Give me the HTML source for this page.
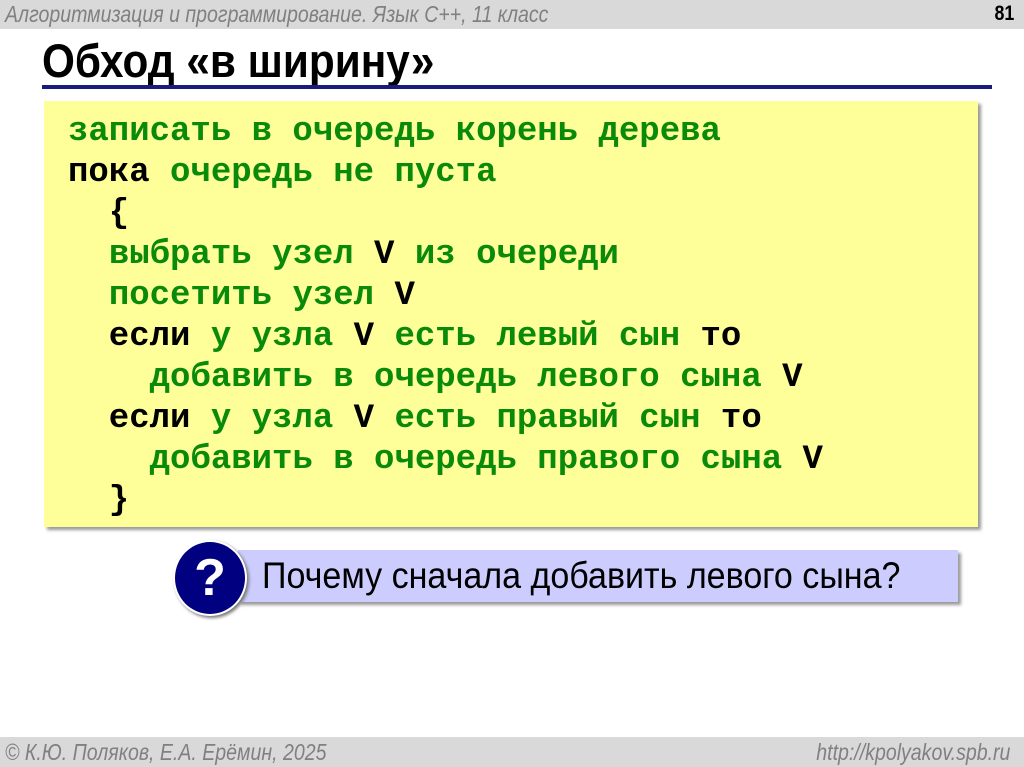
<!DOCTYPE html>
<html><head><meta charset="utf-8"><style>
body{margin:0;width:1024px;height:767px;background:#fff;position:relative;overflow:hidden;font-family:"Liberation Sans",sans-serif}
.hdr{position:absolute;left:0;top:0;width:1024px;height:29px;background:#d9d9d9}
.hdr .t{position:absolute;left:5px;top:1px;font-size:23px;font-style:italic;color:#808080;transform:scaleX(.85);transform-origin:left;white-space:nowrap}
.hdr .n{position:absolute;right:10px;top:2px;font-size:21px;font-weight:bold;color:#000;transform:scaleX(.85);transform-origin:right}
.title{position:absolute;left:42px;top:33px;font-size:47px;font-weight:bold;transform:scaleX(.9);transform-origin:left;white-space:nowrap}
.line{position:absolute;left:42px;top:85px;width:950px;height:4px;background:#1a1a80}
.box{position:absolute;left:44px;top:101px;width:934px;height:426px;background:#ffff99;box-shadow:3px 3px 3px #999}
pre{position:absolute;left:68px;top:112px;margin:0;font-family:"Liberation Mono",monospace;font-weight:bold;font-size:34px;line-height:41px;color:#000}
.g{color:#0a8a0a}
.q{position:absolute;left:238px;top:550px;width:720px;height:52px;background:#ccccff;box-shadow:3px 3px 3px #999}
.q span{position:absolute;left:24px;top:5px;font-size:37px;transform:scaleX(.92);transform-origin:left;white-space:nowrap}
.c{position:absolute;left:173px;top:540px;width:70px;height:72px;border-radius:50%;background:#000080;border:2px solid #fff;box-shadow:2px 2px 3px #777;color:#fff;font-weight:bold;font-size:52px;text-align:center;line-height:72px}
.ftr{position:absolute;left:0;top:737px;width:1024px;height:30px;background:#d9d9d9;color:#808080;font-style:italic;font-size:23px}
.ftr .l{position:absolute;left:5px;top:2px;transform:scaleX(.85);transform-origin:left;white-space:nowrap}
.ftr .r{position:absolute;right:14px;top:2px;transform:scaleX(.85);transform-origin:right;white-space:nowrap}
</style></head><body>
<div class="hdr"><div class="t">Алгоритмизация и программирование. Язык C++, 11 класс</div><div class="n">81</div></div>
<div class="title">Обход «в ширину»</div>
<div class="line"></div>
<div class="box"></div>
<pre><span class="g">записать в очередь корень дерева</span>
пока <span class="g">очередь не пуста</span>
  {
  <span class="g">выбрать узел</span> V <span class="g">из очереди</span>
  <span class="g">посетить узел</span> V
  если <span class="g">у узла</span> V <span class="g">есть левый сын</span> то
    <span class="g">добавить в очередь левого сына</span> V
  если <span class="g">у узла</span> V <span class="g">есть правый сын</span> то
    <span class="g">добавить в очередь правого сына</span> V
  }</pre>
<div class="q"><span>Почему сначала добавить левого сына?</span></div>
<div class="c">?</div>
<div class="ftr"><div class="l">© К.Ю. Поляков, Е.А. Ерёмин, 2025</div><div class="r">http://kpolyakov.spb.ru</div></div>
</body></html>
